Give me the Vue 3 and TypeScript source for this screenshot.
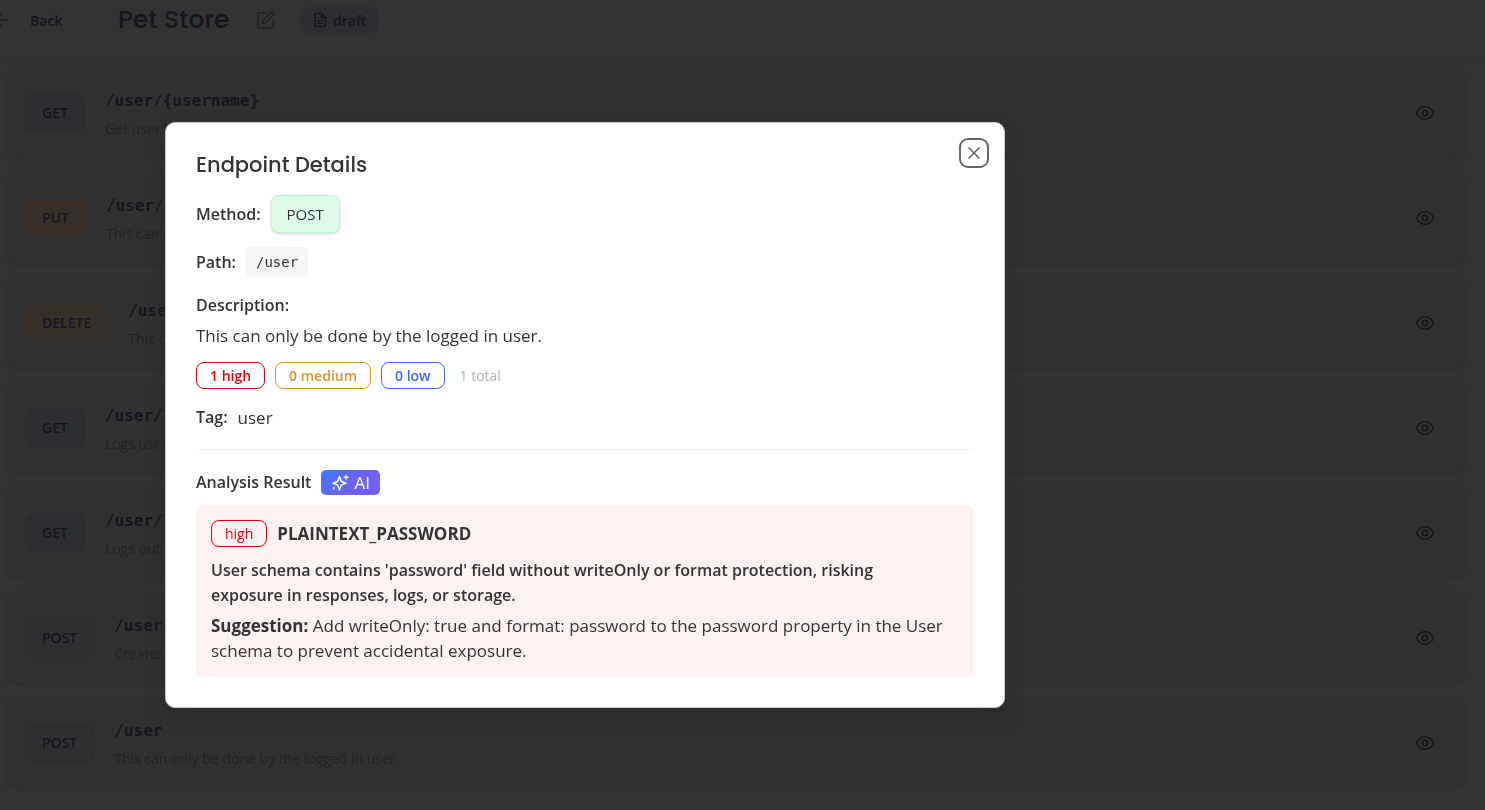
<script setup lang="ts">
import { ref } from 'vue'

interface Endpoint {
  method: string
  path: string
  summary: string
}

const endpoints: Endpoint[] = [
  { method: 'GET', path: '/user/{username}', summary: 'Get user by user name.' },
  { method: 'PUT', path: '/user/{username}', summary: 'This can only be done by the logged in user.' },
  { method: 'DELETE', path: '/user/{username}', summary: 'This can only be done by the logged in user.' },
  { method: 'GET', path: '/user/login', summary: 'Logs user into the system.' },
  { method: 'GET', path: '/user/logout', summary: 'Logs out current logged in user session.' },
  { method: 'POST', path: '/user/createWithList', summary: 'Creates list of users with given input array.' },
  { method: 'POST', path: '/user', summary: 'This can only be done by the logged in user.' },
]

const open = ref(true)
</script>

<template>
  <div class="page">
    <header class="topbar">
      <button class="back" type="button">
        <svg width="16" height="16" viewBox="0 0 16 16" fill="none" stroke="currentColor" stroke-width="1.6" stroke-linecap="round" stroke-linejoin="round" aria-hidden="true">
          <path d="M14 8H2M8 2L2 8l6 6" />
        </svg>
        <span>Back</span>
      </button>
      <h1>Pet Store</h1>
      <button class="edit" type="button" aria-label="Edit name">
        <svg width="20" height="20" viewBox="0 0 20 20" fill="none" stroke="currentColor" stroke-width="1.3" stroke-linejoin="round" aria-hidden="true">
          <path d="M10 3H2v15h15v-8" />
          <path d="M6.500 13.500l1-3.500 8.500-8.500 2.500 2.500-8.500 8.500z" />
        </svg>
      </button>
      <span class="status">
        <svg width="14" height="16" viewBox="0 0 14 16" fill="none" stroke="currentColor" stroke-width="1.5" stroke-linejoin="round" aria-hidden="true">
          <path d="M2 1.500h6.500l4 4v9H2zM8.500 1.500v4h4M4.500 8.500h5.500M4.500 11.500h5.500M4.500 5.500h1.500" />
        </svg>
        draft
      </span>
    </header>

    <main class="list">
      <article v-for="(item, i) in endpoints" :key="i" class="card">
        <span class="method" :class="item.method.toLowerCase()">{{ item.method }}</span>
        <div class="info">
          <div class="path">{{ item.path }}</div>
          <div class="summary">{{ item.summary }}</div>
        </div>
        <button class="view" type="button" aria-label="View details" @click="open = true">
          <svg width="20" height="20" viewBox="0 0 20 20" fill="none" stroke="currentColor" stroke-width="1.6" aria-hidden="true">
            <path d="M1.500 10C3.500 5.500 6.500 3.800 10 3.800s6.500 1.700 8.500 6.200c-2 4.500-5 6.200-8.500 6.200S3.500 14.500 1.500 10z" />
            <circle cx="10" cy="10" r="2.700" />
          </svg>
        </button>
      </article>
    </main>

    <div v-if="open" class="overlay">
      <section class="dialog" role="dialog" aria-modal="true" aria-labelledby="dialog-title">
        <button class="close" type="button" aria-label="Close" @click="open = false">
          <svg width="12" height="12" viewBox="0 0 12 12" fill="none" stroke="currentColor" stroke-width="1.4" stroke-linecap="round" aria-hidden="true">
            <path d="M1 1l10 10M11 1L1 11" />
          </svg>
        </button>
        <h2 id="dialog-title">Endpoint Details</h2>

        <div class="row method-row">
          <span class="label">Method:</span>
          <span class="method-badge">POST</span>
        </div>
        <div class="row path-row">
          <span class="label">Path:</span>
          <code>/user</code>
        </div>
        <div class="description">
          <div class="label">Description:</div>
          <p>This can only be done by the logged in user.</p>
        </div>
        <div class="row counts">
          <span class="pill high">1 high</span>
          <span class="pill medium">0 medium</span>
          <span class="pill low">0 low</span>
          <span class="total">1 total</span>
        </div>
        <div class="row tag-row">
          <span class="label">Tag:</span>
          <span>user</span>
        </div>

        <hr />

        <div class="row">
          <h3>Analysis Result</h3>
          <span class="ai">
            <svg width="18" height="18" viewBox="0 0 18 18" fill="none" stroke="currentColor" stroke-width="1.5" stroke-linecap="round" stroke-linejoin="round" aria-hidden="true">
              <path d="M8.500 2.500l1.300 3.700c.3.900.9 1.500 1.800 1.800l3.400 1.200-3.400 1.200c-.9.300-1.500.9-1.800 1.800l-1.300 3.700-1.300-3.700c-.3-.900-.9-1.500-1.800-1.800L2 9.200 5.400 8c.9-.300 1.500-.900 1.800-1.800z" />
              <path d="M15 1.500v3.500M13.200 3.200h3.600M2.800 13.500v1.500" />
            </svg>
            AI
          </span>
        </div>

        <div class="finding">
          <div class="row">
            <span class="pill high plain">high</span>
            <strong>PLAINTEXT_PASSWORD</strong>
          </div>
          <p class="issue">User schema contains 'password' field without writeOnly or format protection, risking exposure in responses, logs, or storage.</p>
          <p class="suggestion"><strong>Suggestion:</strong> Add writeOnly: true and format: password to the password property in the User schema to prevent accidental exposure.</p>
        </div>
      </section>
    </div>
  </div>
</template>

<style>
body {
  margin: 0;
  background: #333333;
}
</style>

<style scoped>
* {
  box-sizing: border-box;
}

.page {
  height: 100vh;
  overflow: hidden;
  background: #333333;
  color: #14141f;
  font-family: "Segoe UI", "Open Sans", "Noto Sans", sans-serif;
  font-size: 17px;
}

button {
  padding: 0;
  border: 0;
  background: none;
  color: inherit;
  font: inherit;
}

h1,
h2,
h3,
p {
  margin: 0;
}

svg {
  display: block;
  flex: none;
}

.topbar {
  display: flex;
  align-items: center;
  height: 61px;
  padding-bottom: 20px;
  border-bottom: 1px solid #303030;
}

.back {
  display: flex;
  align-items: center;
  gap: 21px;
  width: 125px;
  margin-left: -7px;
  font-size: 14px;
  font-weight: 600;
}

h1 {
  width: 138px;
  font-family: Poppins, Inter, sans-serif;
  font-size: 25px;
  font-weight: 500;
  line-height: 30px;
}

.edit {
  margin-right: 24px;
  color: #1f1f26;
}

.status {
  display: flex;
  align-items: center;
  gap: 6px;
  height: 26px;
  padding: 0 13px;
  border-radius: 8px;
  background: #2c2d32;
  font-size: 14px;
  font-weight: 600;
}

.list {
  display: flex;
  flex-direction: column;
  gap: 13px;
  padding: 6px 19px 0 5px;
}

.card {
  display: flex;
  align-items: center;
  height: 92px;
  padding: 0 31px 0 20px;
  border-radius: 16px;
  background: #313131;
  box-shadow: 0 1px 2px #2d2d2d;
}

.method {
  margin-right: 20px;
  padding: 0 16px;
  border: 1px solid #2a2b31;
  border-radius: 8px;
  background: #2d2e32;
  font-size: 14px;
  font-weight: 600;
  line-height: 36px;
}

.method.put,
.method.delete {
  border-color: #3a2f28;
  background: #372f29;
}

.method.post {
  border-color: #2b2c30;
  background: #2e2f30;
}

.info {
  flex: 1;
  padding-top: 3px;
}

.path {
  font-family: "DejaVu Sans Mono", monospace;
  font-size: 16px;
  font-weight: 600;
  line-height: 26px;
}

.summary {
  margin-top: 3px;
  color: #222226;
  font-size: 14px;
  line-height: 24px;
}

.overlay {
  position: fixed;
  inset: 0;
  padding: 122px 165px 0;
}

.dialog {
  position: relative;
  max-width: 840px;
  padding: 30px;
  border: 1px solid #c9c9c9;
  border-radius: 10px;
  background: #ffffff;
  box-shadow: 0 10px 16px #2a2a2a;
  color: #333333;
  line-height: 25px;
}

.close {
  position: absolute;
  top: 15px;
  right: 15px;
  display: flex;
  align-items: center;
  justify-content: center;
  width: 30px;
  height: 30px;
  border: 2px solid #666666;
  border-radius: 9px;
  color: #555555;
}

h2 {
  font-family: Poppins, Inter, sans-serif;
  font-size: 21px;
  font-weight: 500;
  line-height: 24px;
}

.row {
  display: flex;
  align-items: center;
  gap: 10px;
}

.label,
h3 {
  font-size: 16px;
  font-weight: 600;
}

.method-row {
  margin-top: 18px;
}

.method-badge {
  padding: 0 15px;
  border: 1px solid #b9f8cf;
  border-radius: 8px;
  background: #dcfbe8;
  box-shadow: 0 1px 3px #d5d5d5;
  font-size: 15px;
  font-weight: 500;
  line-height: 36px;
}

.path-row {
  margin-top: 14px;
}

code {
  padding: 0 10px;
  border-radius: 5px;
  background: #f4f5f5;
  font-family: "DejaVu Sans Mono", monospace;
  font-size: 14px;
  line-height: 30px;
}

.description {
  margin-top: 16px;
}

.description p {
  margin-top: 5px;
}

.counts {
  margin-top: 14px;
}

.pill {
  padding: 0 13px;
  border: 1px solid currentColor;
  border-radius: 8px;
  font-size: 14px;
  font-weight: 600;
  line-height: 25px;
}

.high {
  color: #e7000b;
}

.medium {
  color: #d9952a;
}

.low {
  color: #3b66f5;
}

.plain {
  font-weight: 500;
}

.total {
  margin-left: 5px;
  color: #b5b5b5;
  font-size: 14px;
}

.tag-row {
  margin-top: 16px;
}

hr {
  height: 1px;
  margin: 19px 0 20px;
  border: 0;
  background: #f4f4f4;
}

.ai {
  display: flex;
  align-items: center;
  gap: 5px;
  height: 25px;
  padding: 0 10px;
  border-radius: 5px;
  background: linear-gradient(135deg, #3f78ff, #7060f8 60%);
  color: #ffffff;
}

.finding {
  margin-top: 10px;
  padding: 15px 15px 14px;
  border-radius: 8px;
  background: #fef1f1;
}

.issue {
  margin-top: 11px;
  padding-right: 20px;
  font-size: 16px;
  font-weight: 600;
}

.suggestion {
  margin-top: 5px;
}
</style>
